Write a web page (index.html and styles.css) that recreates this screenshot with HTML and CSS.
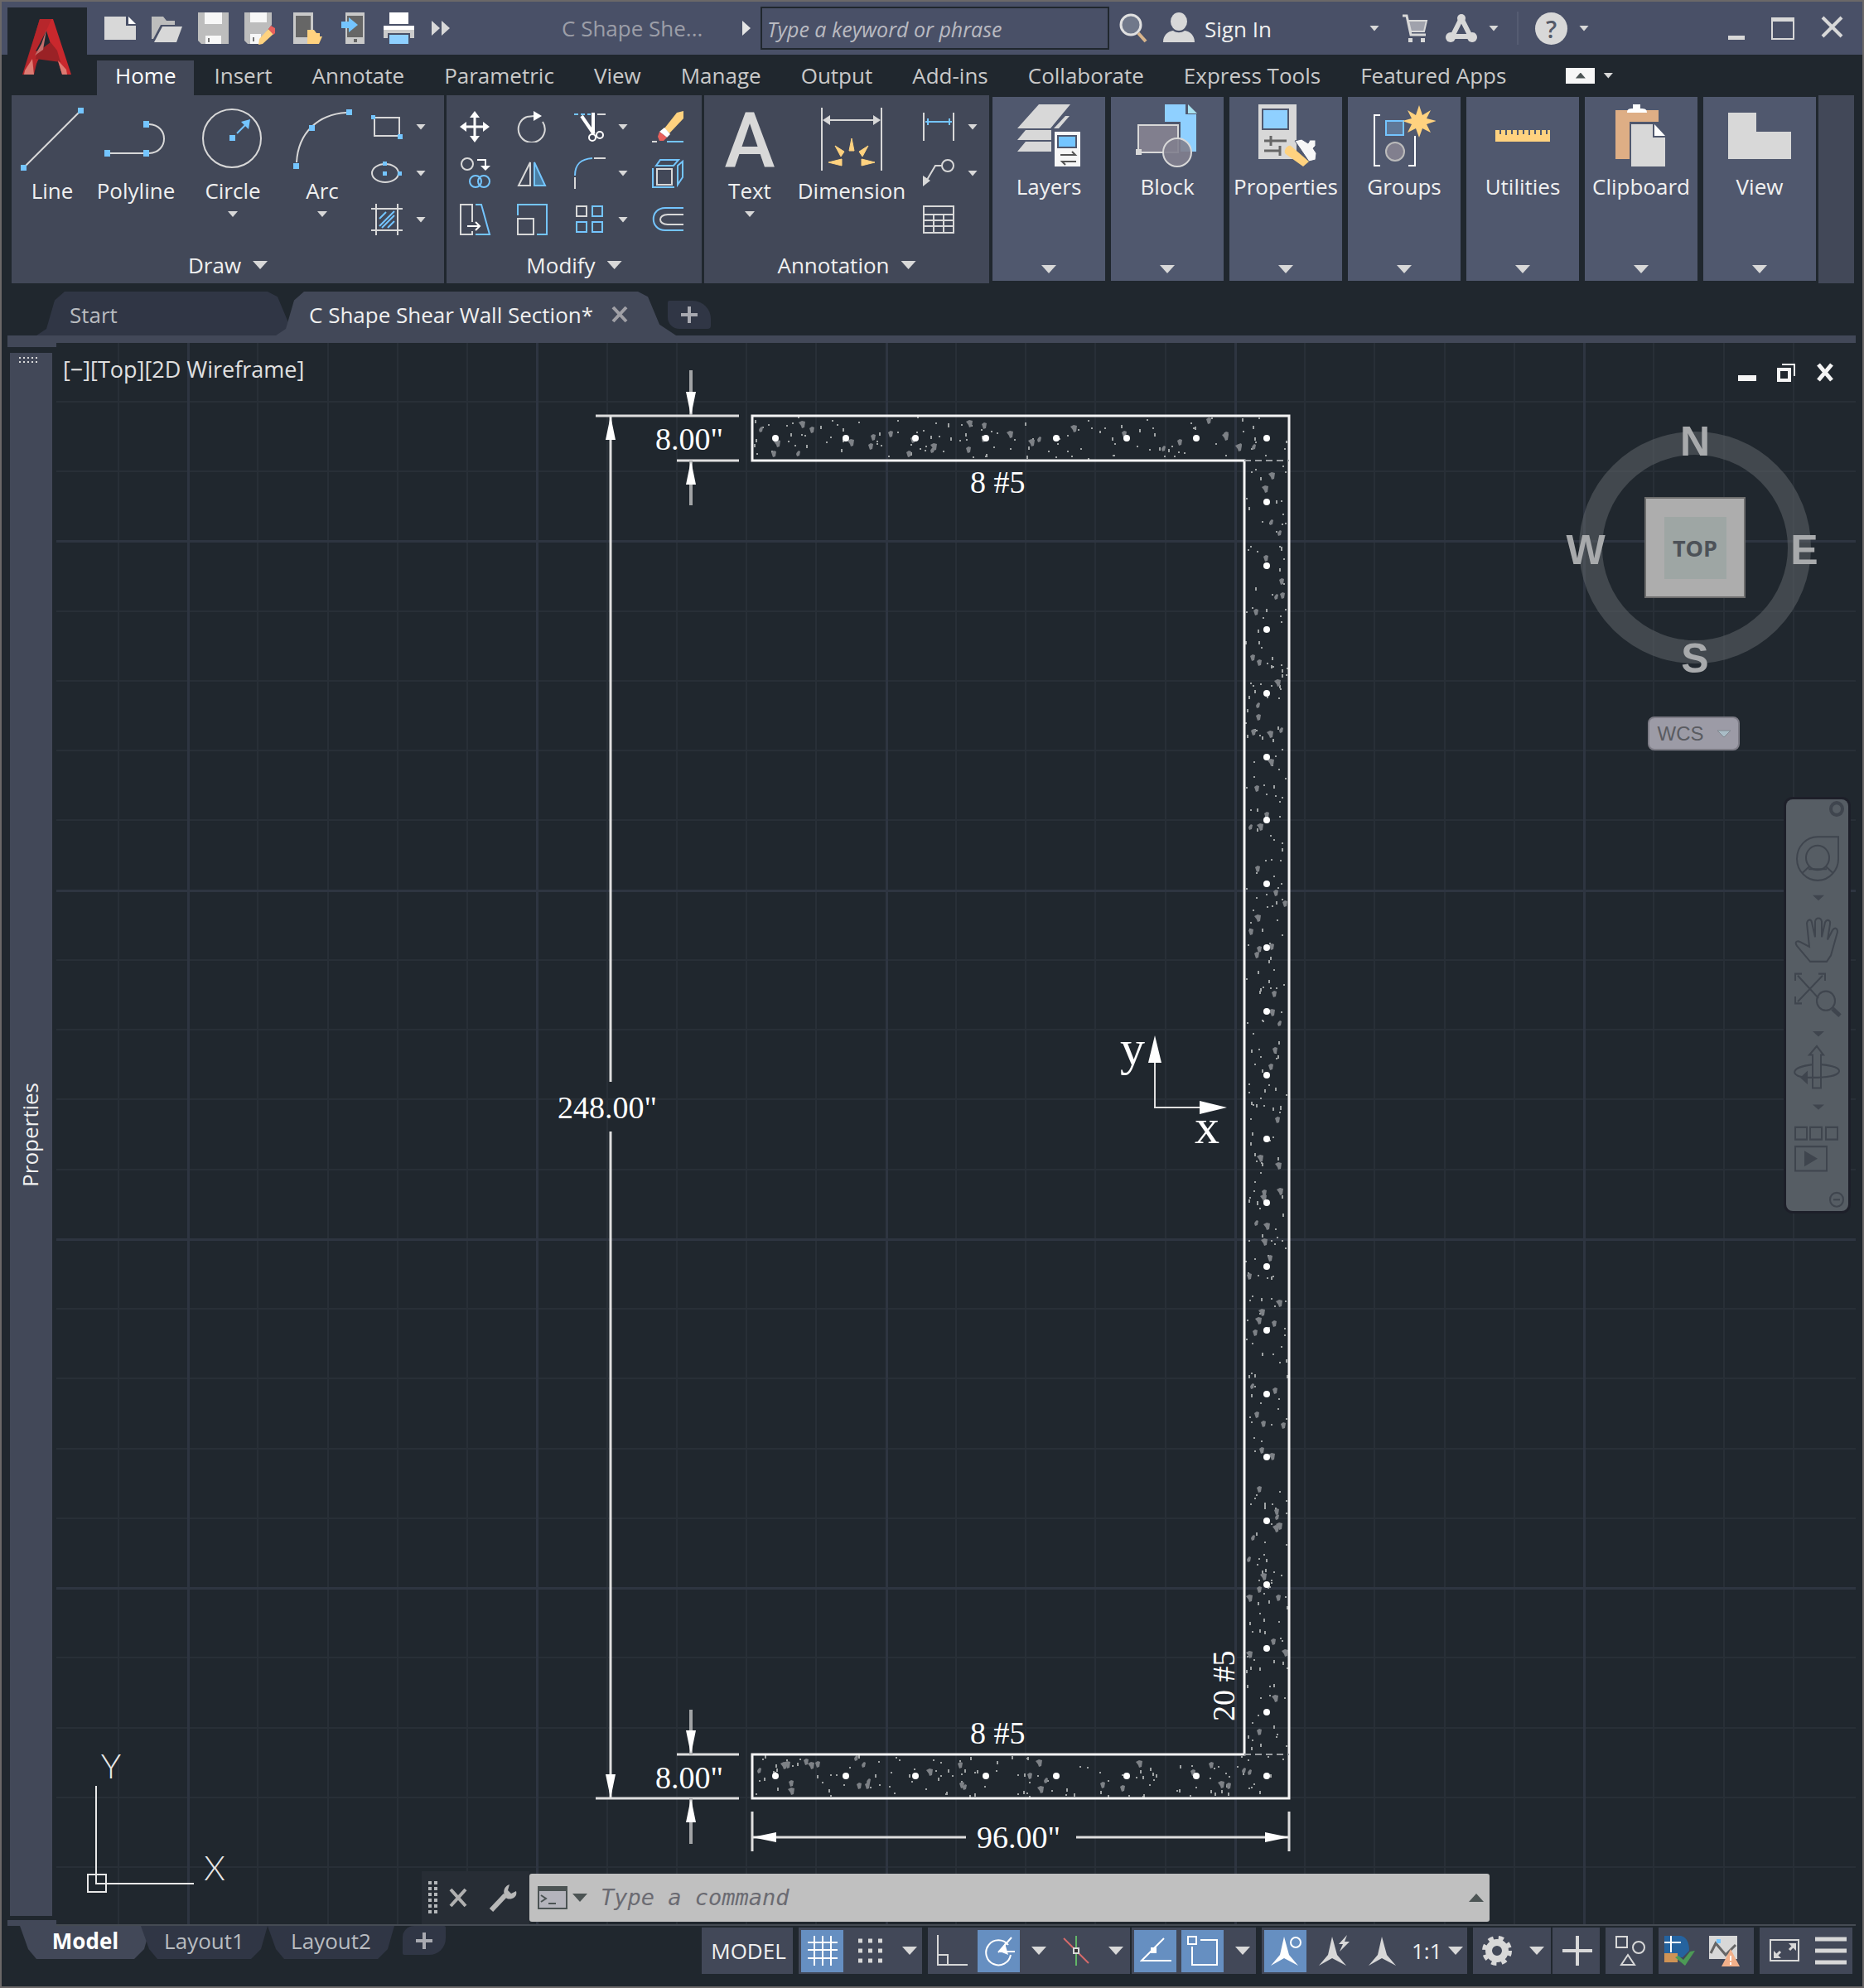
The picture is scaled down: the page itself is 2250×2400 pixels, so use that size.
FILE: index.html
```html
<!DOCTYPE html>
<html lang="en">
<head>
    <meta charset="UTF-8">
    <meta name="viewport" content="width=device-width, initial-scale=1.0">
    <title>C Shape Shear Wall Section</title>
    <link rel="stylesheet" href="styles.css">
</head>
<body>
<div class="app">
    <button class="logo" aria-label="Application menu">
        <svg width="60" height="67" viewBox="0 0 60 67">
            <path d="M21 0h16l22 67H48L41 45 25 36z" fill="#c9282d"/>
            <path d="M21 0h9L14 67H0z" fill="#a8242a"/>
            <path d="M21 0h14l-7 16-4 24-14 27H1z" fill="#b7262b"/>
            <path d="M29 14l6 19-19 6z" fill="#20272e"/>
            <path d="M18 40l16-12 8 10 4 14-30-4z" fill="#9a2226"/>
            <path d="M29 13l-6 17-8 14 10-7z" fill="#c4706c"/>
            <path d="M3 62l9-14 2 19H2z" fill="#dd7a72"/>
            <path d="M43 50l10 11 1 6h-6z" fill="#dd7a72"/>
        </svg>
    </button>

    <header class="titlebar">
        <div class="quick">
            <button aria-label="New"><svg width="40" height="40" viewBox="0 0 40 40"><path d="M1 6h26v11h12v17H1z" fill="#d8d8d8"/><path d="M30 6l9 9h-9z" fill="#fff"/></svg></button>
            <button aria-label="Open"><svg width="40" height="40" viewBox="0 0 40 40"><path d="M2 6h14l4 5h10v5H13L4 33H2z" fill="#bdbdbd"/><path d="M15 18h24l-7 19H5z" fill="#d8d8d8"/></svg></button>
            <button aria-label="Save"><svg width="40" height="40" viewBox="0 0 40 40"><path d="M2 1h37v38H6l-4-4z" fill="#bdbdbd"/><path d="M10 1h21v14H10zM11 29h19v10H11z" fill="#f7f7f7"/><path d="M14 32h2v5h-2z" fill="#777"/></svg></button>
            <button aria-label="Save As"><svg width="40" height="40" viewBox="0 0 40 40"><path d="M2 1h33v15L21 34v5H6l-4-4z" fill="#bdbdbd"/><path d="M9 1h20v12H9zM9 27h13v12H9z" fill="#f7f7f7"/><path d="M12 31h2v5h-2z" fill="#777"/><path d="M31 21l6 6-13 12-5 1 1-7z" fill="#ffd27f"/><path d="M34 17l5 3v6l-2 2-6-7z" fill="#e8605c"/></svg></button>
            <button aria-label="Open from Web"><svg width="40" height="40" viewBox="0 0 40 40"><path d="M5 1h24v38H5z" fill="#c9c9c9"/><path d="M8 5h18v26H8z" fill="#666"/><path d="M22 22h8l3 4h4v4h3l-4 9H22z" fill="#ffd27f"/></svg></button>
            <button aria-label="Save to Web"><svg width="40" height="40" viewBox="0 0 40 40"><path d="M12 1h23v38H12z" fill="#c9c9c9"/><path d="M14 5h19v26H14z" fill="#666"/><path d="M7 12h9V7l11 9-11 9v-5H7z" fill="#74c5ff"/><path d="M22 33h4v4h-4z" fill="#666"/></svg></button>
            <button aria-label="Plot"><svg width="40" height="40" viewBox="0 0 40 40"><path d="M9 1h23v14H9zM2 17h37v5H2z" fill="#fff"/><path d="M2 22h37v10h-5v-6H7v6H2z" fill="#ccc"/><path d="M9 28h23v11H9z" fill="#8fd0ff"/></svg></button>
            <button aria-label="More"><svg width="28" height="40" viewBox="0 0 28 40"><path d="M4 11l10 9-10 9zM16 11l10 9-10 9z" fill="#d8d8d8"/></svg></button>
        </div>
        <div class="doc-title">C Shape She...</div>
        <span class="caret-right"></span>
        <input class="search" type="text" placeholder="Type a keyword or phrase" aria-label="Search">
        <button class="find" aria-label="Find"><svg width="36" height="40" viewBox="0 0 36 40"><circle cx="15" cy="16" r="12" fill="#70788a" stroke="#e0e0e0" stroke-width="3"/><path d="M24 26l9 10" stroke="#d8b58c" stroke-width="4"/></svg></button>
        <button class="signin"><svg width="38" height="40" viewBox="0 0 38 40"><ellipse cx="19" cy="12" rx="10" ry="11" fill="#d8d8d8"/><path d="M0 37c0-9 6-13 12-14 4 3 10 3 14 0 6 1 12 5 12 14z" fill="#d8d8d8"/></svg><span>Sign In</span><i class="caret"></i></button>
        <button class="cart" aria-label="App store"><svg width="32" height="40" viewBox="0 0 32 40"><path d="M1 5h5l5 23h18" fill="none" stroke="#d8d8d8" stroke-width="3"/><path d="M8 11h22l-3 13H11z" fill="#a0a2ac" stroke="#d8d8d8" stroke-width="2"/><path d="M8 32h5v5H8zM23 32h5v5h-5z" fill="#d8d8d8"/></svg></button>
        <button class="apps" aria-label="Autodesk App"><svg width="38" height="40" viewBox="0 0 38 40"><path d="M19 8L7 32M19 8l12 24M7 30h24" fill="none" stroke="#d8d8d8" stroke-width="6"/><circle cx="19" cy="8" r="5" fill="#d8d8d8"/><circle cx="6" cy="31" r="6" fill="#d8d8d8"/><circle cx="32" cy="31" r="6" fill="#d8d8d8"/></svg><i class="caret"></i></button>
        <button class="help" aria-label="Help"><span class="help-mark">?</span><i class="caret"></i></button>
        <div class="window-buttons">
            <button aria-label="Minimize"><svg width="20" height="40"><path d="M0 29h20v5H0z" fill="#d8d8d8"/></svg></button>
            <button aria-label="Maximize"><svg width="28" height="40"><path d="M1 8h26v25H1z" fill="none" stroke="#d8d8d8" stroke-width="2"/><path d="M0 7h28v5H0z" fill="#d8d8d8"/></svg></button>
            <button aria-label="Close"><svg width="27" height="40"><path d="M2 7l23 23M25 7L2 30" stroke="#d8d8d8" stroke-width="4"/></svg></button>
        </div>
    </header>

    <nav class="menu">
        <button class="active">Home</button>
        <button>Insert</button>
        <button>Annotate</button>
        <button>Parametric</button>
        <button>View</button>
        <button>Manage</button>
        <button>Output</button>
        <button>Add-ins</button>
        <button>Collaborate</button>
        <button>Express Tools</button>
        <button>Featured Apps</button>
        <span class="ribbon-toggle"><b class="up"></b></span>
        <i class="caret"></i>
    </nav>

    <div class="ribbon">
        <section class="panel draw">
            <div class="tools">
                <button class="tool w-line"><svg width="76" height="76" viewBox="0 0 76 76"><path d="M4 72L72 4" stroke="#d8d8d8" stroke-width="2"/><path d="M0 69h7v7H0zM69 0h7v7h-7z" fill="#74c5ff"/></svg>Line</button>
                <button class="tool w-poly"><svg width="76" height="76" viewBox="0 0 76 76"><path d="M6 55h42M54 20c24 1 24 34 0 35" fill="none" stroke="#d8d8d8" stroke-width="2"/><path d="M0 51h7v8H0zM47 51h7v8h-7zM47 16h7v8h-7z" fill="#74c5ff"/></svg>Polyline</button>
                <button class="tool w-circle"><svg width="76" height="76" viewBox="0 0 76 76"><circle cx="37" cy="37" r="35" fill="none" stroke="#d8d8d8" stroke-width="2"/><path d="M43 31L54 20" stroke="#74c5ff" stroke-width="2"/><path d="M59 14l-2 12-9-9zM34 33h7v7h-7z" fill="#74c5ff"/></svg>Circle<i class="caret"></i></button>
                <button class="tool w-arc"><svg width="76" height="76" viewBox="0 0 76 76"><path d="M7 66C9 30 33 8 67 6" fill="none" stroke="#d8d8d8" stroke-width="2"/><path d="M3 67h7v7H3zM22 21h7v7h-7zM67 2h7v7h-7z" fill="#74c5ff"/></svg>Arc<i class="caret"></i></button>
                <div class="mini two">
                    <button aria-label="Rectangle"><svg width="38" height="38" viewBox="0 0 38 38"><path d="M4 8h30v22H4z" fill="none" stroke="#d8d8d8" stroke-width="2"/><path d="M0 5h5v5H0zM32 28h6v6h-6z" fill="#74c5ff"/></svg></button><i class="caret"></i>
                    <button aria-label="Ellipse"><svg width="38" height="38" viewBox="0 0 38 38"><ellipse cx="17" cy="19" rx="16" ry="11" fill="none" stroke="#d8d8d8" stroke-width="2"/><path d="M14 5h5v5h-5zM14 17h5v5h-5zM32 17h5v5h-5z" fill="#74c5ff"/></svg></button><i class="caret"></i>
                    <button aria-label="Hatch"><svg width="38" height="38" viewBox="0 0 38 38"><path d="M0 6h38M0 32h38M6 0v38M32 0v38" stroke="#d8d8d8" stroke-width="2"/><path d="M10 18l8-8M10 27l18-18M13 29l15-15M20 29l8-8" stroke="#74c5ff" stroke-width="2"/></svg></button><i class="caret"></i>
                </div>
            </div>
            <button class="panel-title">Draw<i class="caret big"></i></button>
        </section>

        <section class="panel modify">
            <div class="tools">
                <div class="mini five">
                    <button aria-label="Move"><svg width="38" height="38" viewBox="0 0 38 38"><path d="M18 5v28M4 19h28" stroke="#fff" stroke-width="3"/><path d="M18 0l6 8H12zM18 38l6-8H12zM0 19l8-6v12zM36 19l-8-6v12z" fill="#fff"/></svg></button>
                    <button aria-label="Rotate"><svg width="38" height="38" viewBox="0 0 38 38"><path d="M12 7a16 16 0 1 0 19 6M12 7l9-1" fill="none" stroke="#d8d8d8" stroke-width="2"/><path d="M20 0l10 6-10 6z" fill="#fff"/></svg></button>
                    <button aria-label="Trim"><svg width="38" height="38" viewBox="0 0 38 38"><path d="M0 4h5M8 4h5M16 4h4" stroke="#74c5ff" stroke-width="2"/><path d="M28 4h10" stroke="#d8d8d8" stroke-width="2"/><path d="M9 6l15 22M23 2v24" stroke="#fff" stroke-width="4"/><circle cx="22" cy="32" r="4" fill="none" stroke="#fff" stroke-width="2"/><circle cx="31" cy="29" r="4" fill="none" stroke="#fff" stroke-width="2"/></svg></button>
                    <i class="caret"></i>
                    <button aria-label="Erase"><svg width="38" height="38" viewBox="0 0 38 38"><path d="M30 2l8-2v9L21 27l-6-6z" fill="#ffd27f"/><path d="M15 20l7 8-4 4-9-7z" fill="#fff"/><path d="M9 25l9 7-4 4H9l-2-5z" fill="#e8605c"/><path d="M18 37h20" stroke="#74c5ff" stroke-width="2"/><path d="M0 37h6" stroke="#d8d8d8" stroke-width="2"/></svg></button>
                    <button aria-label="Copy"><svg width="38" height="38" viewBox="0 0 38 38"><circle cx="9" cy="8" r="7" fill="none" stroke="#d8d8d8" stroke-width="2"/><path d="M21 3h10v8" fill="none" stroke="#fff" stroke-width="2"/><path d="M25 10h12l-6 6z" fill="#fff"/><circle cx="19" cy="29" r="7" fill="none" stroke="#74c5ff" stroke-width="2"/><circle cx="29" cy="29" r="7" fill="none" stroke="#74c5ff" stroke-width="2"/></svg></button>
                    <button aria-label="Mirror"><svg width="38" height="38" viewBox="0 0 38 38"><path d="M16 6v28H2z" fill="none" stroke="#d8d8d8" stroke-width="2"/><path d="M21 6v28h13z" fill="#4a7fa5" stroke="#74c5ff" stroke-width="2"/></svg></button>
                    <button aria-label="Fillet"><svg width="38" height="38" viewBox="0 0 38 38"><path d="M1 22C1 8 8 2 22 1" fill="none" stroke="#74c5ff" stroke-width="2"/><path d="M24 1h14M1 24v14" stroke="#d8d8d8" stroke-width="2"/></svg></button>
                    <i class="caret"></i>
                    <button aria-label="Explode"><svg width="38" height="38" viewBox="0 0 38 38"><path d="M1 13v23h26M10 3h22l-6 7H5zM31 10l6-5v19l-6 9z" fill="none" stroke="#74c5ff" stroke-width="2"/><path d="M6 14h18v19H6z" fill="none" stroke="#d8d8d8" stroke-width="2"/></svg></button>
                    <button aria-label="Stretch"><svg width="38" height="38" viewBox="0 0 38 38"><path d="M15 22V1H1v36h14v-4" fill="none" stroke="#d8d8d8" stroke-width="2"/><path d="M19 1h7l10 36H19" fill="none" stroke="#74c5ff" stroke-width="2"/><path d="M9 27h14M19 22l5 5-5 5" fill="none" stroke="#fff" stroke-width="2"/></svg></button>
                    <button aria-label="Scale"><svg width="38" height="38" viewBox="0 0 38 38"><path d="M1 14V1h35v36H24" fill="none" stroke="#74c5ff" stroke-width="2"/><path d="M1 18h19v19H1z" fill="none" stroke="#d8d8d8" stroke-width="2"/></svg></button>
                    <button aria-label="Array"><svg width="38" height="38" viewBox="0 0 38 38"><path d="M3 3h12v12H3z" fill="none" stroke="#d8d8d8" stroke-width="2"/><path d="M22 3h12v12H22zM3 22h12v12H3zM22 22h12v12H22z" fill="none" stroke="#74c5ff" stroke-width="2"/></svg></button>
                    <i class="caret"></i>
                    <button aria-label="Offset"><svg width="38" height="38" viewBox="0 0 38 38"><path d="M38 5H16C-3 5-3 32 16 32h22" fill="none" stroke="#74c5ff" stroke-width="2"/><path d="M38 13H19c-12 0-12 12 0 12h19" fill="none" stroke="#d8d8d8" stroke-width="2"/></svg></button>
                </div>
            </div>
            <button class="panel-title">Modify<i class="caret big"></i></button>
        </section>

        <section class="panel annotation">
            <div class="tools">
                <button class="tool w-text"><svg width="76" height="76" viewBox="0 0 76 76"><text class="icon-a" x="38" y="71">A</text></svg>Text<i class="caret"></i></button>
                <button class="tool w-dim"><svg width="76" height="76" viewBox="0 0 76 76"><path d="M2 0v76M74 0v76M6 15h64" stroke="#d8d8d8" stroke-width="2"/><path d="M3 15l9-6v12zM73 15l-9-6v12z" fill="#d8d8d8"/><path d="M38 37l3 15h-6zM18 46l11 7-4 6zM58 46l-11 7 4 6zM10 66l16-4v8zM66 66l-16-4v8z" fill="#ffd27f" stroke="#ffd27f" stroke-width="1"/></svg>Dimension</button>
                <div class="mini two">
                    <button aria-label="Linear"><svg width="38" height="38" viewBox="0 0 38 38"><path d="M1 2v34M37 2v34" stroke="#d8d8d8" stroke-width="2"/><path d="M3 13h32M6 9v8M32 9v8" stroke="#74c5ff" stroke-width="2"/></svg></button><i class="caret"></i>
                    <button aria-label="Leader"><svg width="38" height="38" viewBox="0 0 38 38"><circle cx="30" cy="10" r="7" fill="none" stroke="#d8d8d8" stroke-width="2"/><path d="M23 10h-8L5 27" fill="none" stroke="#d8d8d8" stroke-width="2"/><path d="M0 35V22l9 6z" fill="#d8d8d8"/></svg></button><i class="caret"></i>
                    <button aria-label="Table"><svg width="38" height="38" viewBox="0 0 38 38"><path d="M1 3h36v32H1zM1 13h36M1 20h36M1 27h36M13 13v22M25 13v22" fill="none" stroke="#d8d8d8" stroke-width="2"/></svg></button>
                </div>
            </div>
            <button class="panel-title">Annotation<i class="caret big"></i></button>
        </section>

        <div class="folded">
            <button><svg width="76" height="76" viewBox="0 0 76 76"><path d="M26 0h38L40 29H0zM44 29l14-15h5L50 29zM10 31h31v12H0zM10 45h31v12H0z" fill="#d8d8d8"/><path d="M45 33h31v42H45z" fill="#f7f7f7"/><path d="M49 38h22v14H49z" fill="#74c5ff" stroke="#50586e" stroke-width="2"/><path d="M52 61h18l-4-4M71 69H54l4 4" fill="none" stroke="#555" stroke-width="2"/></svg><span>Layers</span><i class="caret big"></i></button>
            <button><svg width="76" height="76" viewBox="0 0 76 76"><path d="M35 0h25v12h13v45H54V21H35z" fill="#8fd0ff"/><path d="M63 0l11 11H63z" fill="#a9e2f0"/><path d="M3 25h48v33H3z" fill="#817f8e" stroke="#d8d8d8" stroke-width="2"/><circle cx="50" cy="58" r="17" fill="#817f8e" fill-opacity=".9" stroke="#d8d8d8" stroke-width="2"/><path d="M0 54h7v7H0z" fill="#d8d8d8"/></svg><span>Block</span><i class="caret big"></i></button>
            <button><svg width="76" height="76" viewBox="0 0 76 76"><path d="M5 0h46v66H5z" fill="#d8d8d8"/><path d="M10 6h31v24H10z" fill="#8fd0ff" stroke="#50586e" stroke-width="2"/><path d="M12 44h27M12 56h18M20 38v12M31 50v12" stroke="#666" stroke-width="3"/><path d="M49 44l8-2 8 5 2-4h7v7l-3 3 4 6-1 8-8 2z" fill="#f7f7f7" stroke="#50586e" stroke-width="1"/><path d="M44 50l22 19-7 6-21-15c-4-3 2-12 6-10z" fill="#ffd27f"/></svg><span>Properties</span><i class="caret big"></i></button>
            <button><svg width="76" height="76" viewBox="0 0 76 76"><path d="M9 13H2v61h7M43 74h8V38" fill="none" stroke="#fff" stroke-width="2"/><path d="M16 20h21v17H16z" fill="#5f7898" stroke="#74c5ff" stroke-width="2"/><circle cx="27" cy="57" r="11" fill="#817f8e" stroke="#bbb" stroke-width="2"/><path d="M56 1l4 12 10-6-5 10 12 3-12 4 5 10-10-5-4 11-4-11-10 5 5-10-11-4 11-3-5-10 10 6z" fill="#ffd27f"/></svg><span>Groups</span><i class="caret big"></i></button>
            <button><svg width="76" height="76" viewBox="0 0 76 76"><path d="M5 31h66v14H5z" fill="#ffd27f"/><path d="M11 31v5M18 31v6M25 31v5M32 31v6M39 31v5M46 31v6M53 31v5M60 31v6M67 31v5" stroke="#50586e" stroke-width="2"/></svg><span>Utilities</span><i class="caret big"></i></button>
            <button><svg width="76" height="76" viewBox="0 0 76 76"><path d="M7 7h52v14H24v45H7z" fill="#deae85"/><path d="M26 24h26v16h15v35H26z" fill="#d8d8d8"/><path d="M54 24l13 14H54z" fill="#fff"/><path d="M21 10c0-4 2-5 7-5V0h9v5c6 0 8 1 8 5z" fill="#fff"/></svg><span>Clipboard</span><i class="caret big"></i></button>
            <button><svg width="76" height="76" viewBox="0 0 76 76"><path d="M0 10h34v23h42v33H0z" fill="#d8d8d8"/></svg><span>View</span><i class="caret big"></i></button>
        </div>
        <div class="ribbon-rest"></div>
    </div>

    <div class="file-tabs">
        <button class="file-tab start">Start</button>
        <button class="file-tab current">C Shape Shear Wall Section*<svg width="20" height="20" viewBox="0 0 20 20"><path d="M2 1l16 17M18 1L2 18" stroke="#a0a0a6" stroke-width="4"/></svg></button>
        <button class="new-tab" aria-label="New drawing"><svg width="20" height="20"><path d="M10 0v20M0 10h20" stroke="#a8a9b0" stroke-width="4"/></svg></button>
    </div>

    <div class="workspace">
        <aside class="palette">
            <div class="palette-body">
                <svg class="grip" width="24" height="10"><path d="M1 2h22M1 7h22" stroke="#d8d8d8" stroke-width="2" stroke-dasharray="2 3"/></svg>
                <span class="palette-name">Properties</span>
            </div>
        </aside>

        <main class="canvas">
            <svg class="drawing">
                <g transform="translate(-68 -414)">
                    <g id="grid"></g>
                    <g id="concrete"></g>
                    <g class="wall">
                        <path d="M908 502H1556V2171H908V2118H1502V556H908Z"/>
                        <path class="joint" d="M1502 556h54M1502 2118h54"/>
                    </g>
                    <g class="dims">
                        <path d="M719 502H892M817 556h75M719 2171h173M817 2118h75M737 502V1306M737 1366V2171"/>
                        <path class="dim-soft" d="M834 447v54M834 556v54M834 2064v54M834 2171v55"/>
                        <path d="M908 2187v48M1556 2187v48M908 2218h258M1299 2218h257"/>
                        <path class="thin" d="M1394 1260v77h60"/>
                        <path class="head" d="M737 502l6 29h-12zM737 2171l6-29h-12zM834 502l6-29h-12zM834 556l6 29h-12zM834 2118l6-29h-12zM834 2171l6 29h-12zM908 2218l29-6v12zM1556 2218l-29-6v12zM1394 1250l8 33h-16zM1481 1337l-33-8v16z"/>
                    </g>
                    <g class="dim-text">
                        <text x="791" y="543">8.00"</text>
                        <text x="1171" y="595">8 #5</text>
                        <text x="673" y="1350">248.00"</text>
                        <text x="1171" y="2105">8 #5</text>
                        <text x="791" y="2159">8.00"</text>
                        <text x="1179" y="2231">96.00"</text>
                        <text transform="translate(1490 2078) rotate(-90)">20 #5</text>
                        <text class="axis" x="1352" y="1285">y</text>
                        <text class="axis" x="1442" y="1380">x</text>
                    </g>
                    <g class="ucs">
                        <path d="M116 2156v118h118M106 2263h22v21h-22z"/>
                        <text x="134" y="2147">Y</text>
                        <text x="259" y="2270">X</text>
                    </g>
                </g>
            </svg>

            <div class="view-label">[−][Top][2D Wireframe]</div>
            <div class="view-buttons">
                <button aria-label="Minimize view"><svg width="24" height="24"><path d="M1 15h22v7H1z" fill="#f4f4f4"/></svg></button>
                <button aria-label="Restore view"><svg width="24" height="24"><path d="M7 2h15v14" fill="none" stroke="#f4f4f4" stroke-width="2"/><path d="M3 8h13v13H3z" fill="none" stroke="#f4f4f4" stroke-width="4"/></svg></button>
                <button aria-label="Close view"><svg width="24" height="24"><path d="M4 2l16 19M20 2L4 21" stroke="#f4f4f4" stroke-width="5"/></svg></button>
            </div>

            <div class="viewcube">
                <svg width="308" height="324" viewBox="0 0 308 324">
                    <circle cx="156" cy="155" r="126" fill="none" stroke="#646a6e" stroke-opacity=".5" stroke-width="28"/>
                    <rect x="96" y="95" width="120" height="120" fill="#adadad" stroke="#6d6d6d" stroke-width="2"/>
                    <rect x="119" y="118" width="75" height="75" fill="#9ea6a4"/>
                    <text class="compass" x="156" y="44">N</text>
                    <text class="compass" x="24" y="175">W</text>
                    <text class="compass" x="288" y="175">E</text>
                    <text class="compass" x="156" y="306">S</text>
                    <text class="face" x="156" y="166">TOP</text>
                </svg>
                <button class="wcs">WCS<svg width="20" height="12"><path d="M2 2h16l-8 8z" fill="#a9bcc6" stroke="#80868e" stroke-width="1"/></svg></button>
            </div>

            <div class="navbar">
                <svg width="75" height="497" viewBox="0 0 75 472" preserveAspectRatio="none">
                    <g fill="none" stroke="#3f454e" stroke-width="2">
                        <circle cx="61" cy="11" r="7" stroke-width="4"/>
                        <path d="M38 43h25v24a25 25 0 1 1-25-24z"/><circle cx="38" cy="67" r="14"/><path d="M28 77l-8 7M48 77l8 7M27 80h22"/>
                        <path d="M29 186l-16-18c-4-6 2-6 5-4l10 5-3-27c1-5 5-5 6-1l4 17V140c1-5 7-5 8 0v18l4-17c2-4 7-3 6 2l-3 18 6-11c3-4 6-2 6 2l-8 27-5 7z"/>
                        <path d="M14 202l25 26M44 202l-30 30M11 208v-8h8M39 200h8v8M11 226v8h8"/><circle cx="48" cy="231" r="11"/><path d="M56 240l9 8" stroke-width="5"/>
                        <path d="M32 331v-38h-4l9-10 8 10h-3v38z"/><path d="M32 304c-28 3-28 14-6 15h12c34-1 34-13 4-15"/>
                        <path d="M11 376h14v14H11zM29 376h14v14H29zM48 376h14v14H48zM11 398h38v28H11z"/>
                        <circle cx="61" cy="459" r="8"/><path d="M57 459h8"/>
                    </g>
                    <path d="M32 110h14l-7 6zM32 266h14l-7 6zM32 350h14l-7 6zM26 311v16l-9-8zM22 403l16 9-16 9z" fill="#3f454e"/>
                </svg>
            </div>

            <div class="command">
                <div class="command-handle">
                    <svg width="14" height="42"><path d="M3 1v41M10 1v41" stroke="#b4b7ba" stroke-width="4" stroke-dasharray="4 3"/></svg>
                    <button aria-label="Close command line"><svg width="24" height="24"><path d="M3 2l18 20M21 2L3 22" stroke="#b0b0b0" stroke-width="4"/></svg></button>
                    <button aria-label="Customize"><svg width="34" height="36" viewBox="0 0 34 36"><path d="M3 33L20 15" stroke="#b8b8b8" stroke-width="6"/><path d="M25 2l-2 7 4 4 6-3c2 7-5 11-11 9-5-3-6-14 3-17z" fill="#b8b8b8"/></svg></button>
                </div>
                <div class="command-box">
                    <svg width="38" height="30"><path d="M2 2h34v26H2z" fill="#b4b4bc" stroke="#4c5454" stroke-width="2"/><path d="M1 1h36v6H1z" fill="#4c5454"/><path d="M5 12l6 4-6 4M14 22h9" fill="none" stroke="#4c5454" stroke-width="2"/></svg>
                    <i class="caret big dark"></i>
                    <input type="text" placeholder="Type a command" aria-label="Command">
                    <b class="up"></b>
                </div>
            </div>
        </main>
    </div>

    <footer class="bottom">
        <div class="layout-tabs">
            <button class="layout-tab model">Model</button>
            <button class="layout-tab">Layout1</button>
            <button class="layout-tab">Layout2</button>
            <button class="layout-add" aria-label="New layout"><svg width="20" height="20"><path d="M10 0v20M0 10h20" stroke="#a8a9b0" stroke-width="4"/></svg></button>
        </div>
        <div class="status">
            <div class="group s-model"><button>MODEL</button></div>
            <div class="group s-grid">
                <button class="slot on" aria-label="Grid"><svg width="38" height="38"><path d="M9 1v36M19 1v36M29 1v36M1 9h36M1 18h36M1 28h36" stroke="#fff" stroke-width="2"/></svg></button>
                <button class="slot" aria-label="Snap"><svg width="38" height="38"><path d="M5 7h30M5 19h30M5 31h30" stroke="#d8d8d8" stroke-width="5" stroke-dasharray="5 7"/></svg></button>
                <i class="caret big"></i>
            </div>
            <div class="group s-polar">
                <button class="slot" aria-label="Ortho"><svg width="38" height="38"><path d="M2 0v36h36M2 24h12v12" fill="none" stroke="#d8d8d8" stroke-width="2"/></svg></button>
                <button class="slot on" aria-label="Polar"><svg width="38" height="38"><path d="M30 12A15 15 0 1 0 33 24" fill="none" stroke="#fff" stroke-width="2"/><path d="M20 20h18M18 21L34 3" stroke="#fff" stroke-width="2"/><path d="M26 10l4 14-10-4z" fill="#fff"/></svg></button>
                <i class="caret big"></i>
                <button class="slot" aria-label="Isometric"><svg width="38" height="38"><path d="M4 4l30 30" stroke="#d66a6a" stroke-width="2"/><path d="M19 1v36" stroke="#63b667" stroke-width="2"/><path d="M16 16h6v6h-6z" fill="#333" stroke="#d8d8d8" stroke-width="2"/></svg></button>
                <i class="caret big"></i>
            </div>
            <div class="group near s-snap">
                <button class="slot on" aria-label="Object tracking"><svg width="38" height="38"><path d="M29 4L2 31h36" fill="none" stroke="#fff" stroke-width="2"/><path d="M13 15h7v7h-7z" fill="#fff"/></svg></button>
                <button class="slot on" aria-label="Object snap"><svg width="38" height="38"><path d="M16 6h20v30H6V14" fill="none" stroke="#fff" stroke-width="2"/><path d="M1 2h10v9H1z" fill="none" stroke="#fff" stroke-width="2"/></svg></button>
                <i class="caret big"></i>
            </div>
            <div class="group s-scale">
                <button class="slot on" aria-label="Annotation visibility"><svg width="38" height="38"><path d="M17 2l6 22 11 13-17-9L1 37l11-13z" fill="#fff"/><circle cx="31" cy="9" r="6" fill="none" stroke="#fff" stroke-width="2"/></svg></button>
                <button class="slot" aria-label="Auto scale"><svg width="38" height="38"><path d="M17 2l6 22 11 13-17-9L1 37l11-13z" fill="#d8d8d8"/><path d="M35 0l-10 11h5l-4 9 12-12h-6z" fill="#d8d8d8"/></svg></button>
                <button class="slot" aria-label="Annotation scale"><svg width="38" height="38"><path d="M19 2l6 22 11 13-17-9-16 9 11-13z" fill="#d8d8d8"/></svg></button>
                <button class="ratio">1:1</button>
                <i class="caret big"></i>
            </div>
            <div class="group s-gear">
                <button class="slot" aria-label="Workspace"><svg width="38" height="38"><circle cx="19" cy="19" r="10" fill="none" stroke="#d8d8d8" stroke-width="8"/><circle cx="19" cy="19" r="15" fill="none" stroke="#d8d8d8" stroke-width="6" stroke-dasharray="6 6"/></svg></button>
                <i class="caret big"></i>
            </div>
            <div class="group near s-one"><button aria-label="Monitor"><svg width="38" height="38"><path d="M19 1v36M1 19h36" stroke="#d8d8d8" stroke-width="4"/></svg></button></div>
            <div class="group s-one"><button aria-label="Isolate"><svg width="38" height="38"><path d="M2 2h13v13H2z" fill="none" stroke="#d8d8d8" stroke-width="2"/><circle cx="29" cy="15" r="7" fill="none" stroke="#d8d8d8" stroke-width="2"/><path d="M16 24l8 12H8z" fill="none" stroke="#d8d8d8" stroke-width="2"/></svg></button></div>
            <div class="group s-pair">
                <button aria-label="Geolocation"><svg width="38" height="38"><path d="M1 1h20c8 2 10 10 10 18l-8 8H1z" fill="#25639f"/><path d="M1 22h16v11H1z" fill="#cf9355"/><path d="M9 1v20M1 9h20" stroke="#fff" stroke-width="2"/><path d="M14 27l4-2 6 5 8-10 6-1-12 18z" fill="#4c9a55"/></svg></button>
                <button aria-label="Graphics"><svg width="38" height="38"><path d="M1 1h34v28H1z" fill="#d8d8d8"/><path d="M3 22l6-12 12 14 12-12" fill="none" stroke="#666" stroke-width="3"/><path d="M10 5h5v5h-5z" fill="#74c5ff"/><path d="M27 17l11 21H16z" fill="#f2b08a"/><path d="M27 25v6M27 33v3" stroke="#fff" stroke-width="2"/></svg></button>
            </div>
            <div class="group s-last">
                <button aria-label="Clean screen"><svg width="38" height="38"><path d="M2 6h34v25H2z" fill="none" stroke="#d8d8d8" stroke-width="2"/><path d="M24 10h9v9zM6 19v9h9z" fill="#d8d8d8"/><path d="M32 11l-7 7M7 27l7-7" stroke="#d8d8d8" stroke-width="3"/></svg></button>
                <button aria-label="Customization"><svg width="38" height="38"><path d="M0 5h38M0 19h38M0 33h38" stroke="#d8d8d8" stroke-width="5"/></svg></button>
            </div>
        </div>
    </footer>
</div>
<script src="script.js"></script>
</body>
</html>
```

FILE: styles.css
```css
* {
    box-sizing: border-box;
}

body {
    margin: 0;
    background-color: #20272e;
    color: #f0f0f0;
    font-family: 'Open Sans', 'Noto Sans', sans-serif;
    font-size: 26px;
    line-height: 34px;
}

button {
    display: flex;
    flex-shrink: 0;
    align-items: center;
    padding: 0;
    border: none;
    background: none;
    color: inherit;
    font: inherit;
    white-space: nowrap;
}

input {
    min-width: 0;
    font: inherit;
    outline: none;
}

svg {
    display: block;
    flex-shrink: 0;
}

.app {
    position: relative;
    display: flex;
    flex-direction: column;
    min-height: 100vh;
    border: 2px solid #6b6868;
    overflow: hidden;
}

/* carets */
.caret {
    width: 12px;
    height: 7px;
    flex-shrink: 0;
    background-color: #d8d8d8;
    clip-path: polygon(0 0, 100% 0, 50% 100%);
}

.caret.big {
    width: 18px;
    height: 10px;
}

.caret.dark {
    background-color: #4c5454;
}

.caret-right {
    width: 10px;
    height: 18px;
    background-color: #e4e4e4;
    clip-path: polygon(0 0, 100% 50%, 0 100%);
}

.up {
    width: 18px;
    height: 10px;
    background-color: #4c5454;
    clip-path: polygon(50% 0, 100% 100%, 0 100%);
}

/* title bar */
.logo {
    position: absolute;
    left: 7px;
    top: 7px;
    width: 96px;
    height: 92px;
    justify-content: center;
    align-items: flex-start;
    padding-top: 14px;
    background-color: #20272e;
}

.titlebar {
    display: flex;
    align-items: center;
    height: 64px;
    padding: 0 23px 0 123px;
    background-color: #495067;
}

.quick {
    display: flex;
    gap: 16px;
}

.doc-title {
    width: 218px;
    margin-left: 133px;
    color: #9c9ea8;
}

.search {
    flex: 0 1 421px;
    height: 52px;
    margin-left: 12px;
    padding: 2px 6px 0;
    border: 2px solid #20272e;
    background: none;
    color: #fff;
    font-size: 25px;
    font-style: italic;
}

.search::placeholder {
    color: #b9bac1;
    opacity: 1;
}

.find {
    margin-left: 11px;
}

.signin {
    margin-left: 18px;
}

.signin span {
    width: 211px;
    padding: 2px 0 0 12px;
    text-align: left;
}

.cart {
    margin-left: 27px;
}

.apps {
    gap: 14px;
    margin-left: 21px;
    padding-right: 22px;
    border-right: 2px solid #555c72;
}

.help {
    gap: 14px;
    margin-left: 20px;
}

.help-mark {
    width: 39px;
    height: 39px;
    border-radius: 50%;
    background-color: #d8d8d8;
    color: #555a68;
    font-size: 29px;
    font-weight: 600;
    line-height: 39px;
    text-align: center;
}

.window-buttons {
    display: flex;
    gap: 32px;
    margin-left: auto;
}

/* ribbon tabs */
.menu {
    display: flex;
    align-items: center;
    height: 49px;
    padding: 7px 0 0 115px;
    color: #c9c9c9;
}

.menu button {
    height: 42px;
    padding: 0 24px 6px;
}

.menu .active {
    padding: 0 22px 6px;
    background-color: #424858;
    color: #fff;
}

.ribbon-toggle {
    display: flex;
    align-items: center;
    justify-content: center;
    width: 35px;
    height: 19px;
    margin: 0 10px 6px 48px;
    background-color: #f7f7f7;
}

.ribbon-toggle .up {
    width: 12px;
    height: 7px;
}

.menu .caret {
    margin-bottom: 6px;
}

/* ribbon panels */
.ribbon {
    display: flex;
    height: 227px;
    padding: 0 10px 0 12px;
}

.panel {
    display: flex;
    flex-direction: column;
    flex-shrink: 0;
    margin-right: 3px;
    background-color: #424858;
}

.draw {
    width: 522px;
}

.modify {
    width: 308px;
}

.annotation {
    width: 344px;
}

.tools {
    display: flex;
    flex: 1;
}

.tool {
    flex-direction: column;
    padding-top: 15px;
}

.tool svg {
    margin-bottom: 7px;
    overflow: visible;
}

.tool .caret {
    margin-top: 8px;
}

.w-line {
    width: 98px;
}

.w-poly {
    width: 104px;
}

.w-circle {
    width: 130px;
}

.w-arc {
    width: 86px;
}

.w-text {
    width: 110px;
}

.w-dim {
    width: 136px;
}

.icon-a {
    fill: #d8d8d8;
    font-family: Roboto, sans-serif;
    font-size: 92px;
    font-weight: 500;
    text-anchor: middle;
}

.mini {
    display: grid;
    grid-auto-rows: 56px;
    align-items: center;
    align-content: start;
    padding: 10px 0 0 16px;
}

.two {
    grid-template-columns: 54px 12px;
}

.annotation .mini {
    padding-left: 18px;
}

.five {
    grid-template-columns: 69px 69px 53px 41px 38px;
}

.panel-title {
    justify-content: center;
    gap: 14px;
    height: 44px;
}

.folded {
    display: flex;
    gap: 7px;
    padding: 2px 3px 3px 1px;
}

.folded button {
    flex-direction: column;
    width: 136px;
    padding: 9px 0;
    background-color: #50586e;
}

.folded span {
    margin-top: 6px;
}

.folded .caret {
    margin-top: auto;
}

.ribbon-rest {
    flex: 1;
    background-color: #424858;
}

/* drawing tabs */
.file-tabs {
    display: flex;
    align-items: flex-end;
    height: 72px;
    margin: 0 8px 0 7px;
    padding: 0 0 0 35px;
    border-bottom: 9px solid #424858;
}

.file-tab {
    height: 53px;
    padding-top: 2px;
    clip-path: polygon(0 100%, 12px 85%, 22px 20%, 34px 0, calc(100% - 46px) 0, calc(100% - 34px) 12%, calc(100% - 20px) 75%, 100% 100%);
}

.start {
    width: 325px;
    margin-right: -36px;
    padding-left: 40px;
    background-color: #303645;
    color: #b9bcc0;
}

.current {
    gap: 22px;
    padding-right: 58px;
    padding-left: 40px;
    background-color: #424858;
}

.new-tab {
    justify-content: center;
    width: 52px;
    height: 34px;
    margin: 0 0 8px -10px;
    border-radius: 2px 22px 4px 14px;
    background-color: #303645;
}

/* workspace */
.workspace {
    display: flex;
    flex: 1;
    margin: 0 8px 0 7px;
}

.palette {
    display: flex;
    width: 59px;
    padding: 7px 5px 5px 3px;
    border-top: 5px solid #424858;
    border-bottom: 7px solid #424858;
}

.palette-body {
    position: relative;
    display: flex;
    flex: 1;
    flex-direction: column;
    align-items: center;
    justify-content: center;
    padding-right: 4px;
    background-color: #424858;
}

.grip {
    position: absolute;
    top: 4px;
    left: 10px;
}

.palette-name {
    writing-mode: vertical-rl;
    transform: rotate(180deg);
}

.canvas {
    position: relative;
    flex: 1;
    border-bottom: 2px solid #454b53;
    overflow: hidden;
}

.drawing {
    position: absolute;
    width: 100%;
    height: 100%;
}

.minor {
    fill: #282f37;
}

.major {
    fill: #2e3541;
}

.wall path {
    fill: none;
    stroke: #f4f4f4;
    stroke-width: 3;
}

.wall .joint {
    stroke: #9a9ea2;
    stroke-dasharray: 8 5;
    stroke-width: 2;
}

.dot {
    fill: #a0a4a5;
}

.stone {
    fill: #7d8186;
}

.bar {
    fill: #fff;
}

.dims path {
    fill: none;
    stroke: #dedede;
    stroke-width: 3;
}

.dims .thin {
    stroke-width: 2;
}

.dims .dim-soft {
    stroke: #a2a4a6;
    stroke-width: 4;
}

.dims .head {
    fill: #fff;
    stroke: none;
}

.dim-text {
    fill: #fff;
    font-family: 'Liberation Serif', serif;
    font-size: 38px;
}

.dim-text .axis {
    font-size: 60px;
}

.ucs path {
    fill: none;
    stroke: #e8e8e8;
    stroke-width: 2;
}

.ucs text {
    fill: #e8e8e8;
    font-family: Lato, sans-serif;
    font-size: 41px;
    font-weight: 300;
    text-anchor: middle;
}

.view-label {
    position: absolute;
    left: 8px;
    top: 15px;
    color: #e0e0e0;
    font-size: 27px;
}

.view-buttons {
    position: absolute;
    top: 24px;
    right: 25px;
    display: flex;
    gap: 23px;
}

.viewcube {
    position: absolute;
    top: 92px;
    right: 42px;
    display: flex;
    flex-direction: column;
    align-items: center;
    gap: 35px;
}

.compass {
    fill: #a8aaac;
    font-family: 'Liberation Sans', sans-serif;
    font-size: 50px;
    font-weight: bold;
    text-anchor: middle;
}

.face {
    fill: #4d5258;
    font-size: 27px;
    font-weight: bold;
    text-anchor: middle;
}

.wcs {
    gap: 14px;
    width: 111px;
    height: 41px;
    padding-left: 10px;
    border: 2px solid #7d7c86;
    border-radius: 8px;
    background-color: #9c9ba6;
    color: #5a5b61;
    font-family: 'Liberation Sans', sans-serif;
    font-size: 24px;
}

.navbar {
    position: absolute;
    top: 551px;
    right: 9px;
    border-radius: 8px;
    box-shadow: 0 0 0 3px #1d1f29;
    background-color: #565d64;
}

.command {
    position: absolute;
    left: 441px;
    right: 442px;
    bottom: 0;
    display: flex;
    height: 64px;
}

.command-handle {
    display: flex;
    align-items: center;
    gap: 11px;
    width: 130px;
    padding: 0 14px 0 7px;
    background-color: #272d35;
}

.command-handle button + button {
    margin-left: 14px;
}

.command-box {
    display: flex;
    flex: 1;
    align-items: center;
    margin: 3px 0;
    padding: 0 7px 0 9px;
    border-radius: 3px;
    background-color: #c0c0c0;
}

.command-box .caret {
    margin: 0 14px 0 5px;
}

.command-box input {
    flex: 1;
    border: none;
    background: none;
    color: #333;
    font-family: 'DejaVu Sans Mono', monospace;
    font-size: 27px;
    font-style: italic;
}

.command-box input::placeholder {
    color: #6b6b72;
    opacity: 1;
}

/* layouts and status bar */
.bottom {
    display: flex;
    align-items: flex-start;
    justify-content: space-between;
    height: 73px;
    padding: 0 12px 0 22px;
}

.layout-tabs {
    display: flex;
}

.layout-tab {
    justify-content: center;
    width: 153px;
    height: 40px;
    padding-bottom: 4px;
    background-color: #303645;
    color: #b9bcc0;
    clip-path: polygon(0 0, 100% 0, calc(100% - 8px) 70%, calc(100% - 20px) 100%, 20px 100%, 10px 70%);
}

.layout-tab.model {
    width: 158px;
    margin-right: -12px;
    background-color: #424858;
    color: #fff;
    font-weight: bold;
}

.layout-add {
    justify-content: center;
    width: 52px;
    height: 35px;
    margin-left: 10px;
    border-radius: 14px 2px 20px 2px;
    background-color: #303645;
}

.status {
    display: flex;
    padding-top: 2px;
}

.group {
    display: flex;
    align-items: center;
    height: 56px;
    margin-left: 7px;
    padding: 0 0 0 3px;
    background-color: #424858;
}

.group.near {
    margin-left: 2px;
}

.slot {
    justify-content: center;
    width: 51px;
    height: 51px;
    margin-right: 6px;
}

.slot.on {
    background-color: #668fc1;
}

.group .caret {
    margin: 0 10px 0 8px;
}

.s-model {
    width: 110px;
    justify-content: center;
}

.s-grid {
    width: 149px;
}

.s-polar {
    width: 244px;
}

.s-snap {
    width: 150px;
}

.s-scale {
    width: 248px;
}

.s-scale .slot {
    margin-right: 7px;
}

.ratio {
    width: 40px;
    padding-left: 4px;
}

.s-gear {
    width: 94px;
}

.s-one {
    width: 57px;
    justify-content: center;
}

.s-pair {
    width: 115px;
    gap: 16px;
    padding-left: 6px;
}

.s-last {
    width: 112px;
    justify-content: center;
    gap: 18px;
}
```

FILE: script.js
```js
const NS = 'http://www.w3.org/2000/svg';
const grid = document.getElementById('grid');
const concrete = document.getElementById('concrete');

function add(parent, name, className, attrs) {
    const el = document.createElementNS(NS, name);
    el.setAttribute('class', className);
    for (const key in attrs) {
        el.setAttribute(key, attrs[key]);
    }
    parent.appendChild(el);
}

// small seeded generator, the hatch is the same on every load
let seed = 5;
function random() {
    seed = (seed * 16807) % 2147483647;
    return seed / 2147483647;
}

// grid, every fifth line is a major one
function drawGrid(major) {
    const step = 84.26;
    for (let i = -4; i < 60; i++) {
        const isMajor = i % 5 === 0;
        if (isMajor !== major) continue;
        const size = isMajor ? 3 : 2;
        const cls = isMajor ? 'major' : 'minor';
        add(grid, 'rect', cls, { x: Math.round(226 + i * step), y: 0, width: size, height: 4000 });
        add(grid, 'rect', cls, { x: 0, y: Math.round(231 + i * step), width: 5000, height: size });
    }
}
drawGrid(false);
drawGrid(true);

// concrete hatch
function fillConcrete(x, y, w, h) {
    const area = w * h;
    for (let i = 0; i < area * 0.0036; i++) {
        add(concrete, 'rect', 'dot', {
            x: Math.round(x + random() * (w - 2)),
            y: Math.round(y + random() * (h - 2)),
            width: 2,
            height: random() > 0.7 ? 4 : 2
        });
    }
    for (let i = 0; i < area * 0.0009; i++) {
        const cx = Math.round(x + 4 + random() * (w - 8));
        const cy = Math.round(y + 4 + random() * (h - 8));
        const a = 2 + Math.round(random() * 2);
        add(concrete, 'path', 'stone', { d: `M${cx - a} ${cy - 2}l${a} -2l${a} 1l-1 ${a + 3}l-3 1l-1 -3z` });
    }
}
fillConcrete(910, 503, 645, 52);
fillConcrete(1503, 557, 52, 1560);
fillConcrete(910, 2119, 645, 51);

// rebars
for (let i = 0; i < 8; i++) {
    const cx = Math.round(936 + i * 84.7);
    add(concrete, 'circle', 'bar', { cx: cx, cy: 529, r: 4 });
    add(concrete, 'circle', 'bar', { cx: cx, cy: 2144, r: 4 });
}
for (let i = 1; i < 21; i++) {
    add(concrete, 'circle', 'bar', { cx: 1529, cy: Math.round(529 + i * 76.9), r: 4 });
}
```
